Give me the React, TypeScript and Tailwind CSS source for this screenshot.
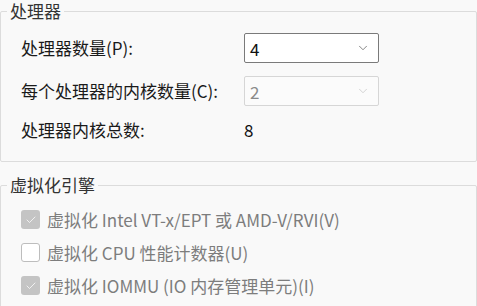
import { ChevronDown, Check } from "lucide-react";

const font = { fontFamily: '"Noto Sans CJK SC", "Noto Sans", sans-serif' };

function Select({ value, disabled }: { value: string; disabled?: boolean }) {
  return (
    <div
      className={
        disabled
          ? "flex h-[30px] w-[135px] items-center justify-between rounded-[2px] border border-[#d6d6d6] bg-[#fbfbfb] pl-[5px] pr-[8px] text-[#8a8a8a]"
          : "flex h-[30px] w-[135px] items-center justify-between rounded-[2px] border border-[#7a7a7a] bg-white pl-[5px] pr-[8px] text-[#111]"
      }
    >
      <span className="text-[17px] leading-none">{value}</span>
      <ChevronDown
        className={disabled ? "h-[14px] w-[14px] text-[#c4c4c4]" : "h-[14px] w-[14px] text-[#5a5a5a]"}
        strokeWidth={1.25}
      />
    </div>
  );
}

function CheckRow({ label, checked }: { label: string; checked?: boolean }) {
  return (
    <div className="flex h-[33px] items-center gap-[7px]">
      {checked ? (
        <div className="flex h-[19px] w-[19px] items-center justify-center rounded-[3px] bg-[#c4c4c4]">
          <Check className="h-[12px] w-[12px] text-white" strokeWidth={1.5} />
        </div>
      ) : (
        <div className="h-[19px] w-[19px] rounded-[3px] border border-[#bdbdbd] bg-white" />
      )}
      <span className="text-[17px] text-[#7d7d7d]">{label}</span>
    </div>
  );
}

export default function App() {
  return (
    <div className="h-[306px] w-[477px] overflow-hidden bg-[#f9f9f9]" style={font}>
      <fieldset className="h-[162px] rounded-[2px] border border-[#dcdcdc] pl-[6px] pr-0">
        <legend className="px-[3px] text-[17px] leading-[22px] text-[#333]">处理器</legend>
        <div className="mt-[11px] flex flex-col pl-[14px]">
          <div className="flex h-[30px] items-center">
            <span className="w-[223px] text-[17px] text-[#1a1a1a]">处理器数量(P):</span>
            <Select value="4" />
          </div>
          <div className="mt-[13px] flex h-[30px] items-center">
            <span className="w-[223px] text-[17px] text-[#1a1a1a]">每个处理器的内核数量(C):</span>
            <Select value="2" disabled />
          </div>
          <div className="mt-[9px] flex h-[30px] items-center">
            <span className="w-[223px] text-[17px] text-[#1a1a1a]">处理器内核总数:</span>
            <span className="text-[17px] text-[#111]">8</span>
          </div>
        </div>
      </fieldset>
      <fieldset className="mt-[12px] h-[200px] rounded-[2px] border border-[#dcdcdc] pl-[6px]">
        <legend className="px-[3px] text-[17px] leading-[22px] text-[#333]">虚拟化引擎</legend>
        <div className="mt-[7px] flex flex-col pl-[14px]">
          <CheckRow label="虚拟化 Intel VT-x/EPT 或 AMD-V/RVI(V)" checked />
          <CheckRow label="虚拟化 CPU 性能计数器(U)" />
          <CheckRow label="虚拟化 IOMMU (IO 内存管理单元)(I)" checked />
        </div>
      </fieldset>
    </div>
  );
}
